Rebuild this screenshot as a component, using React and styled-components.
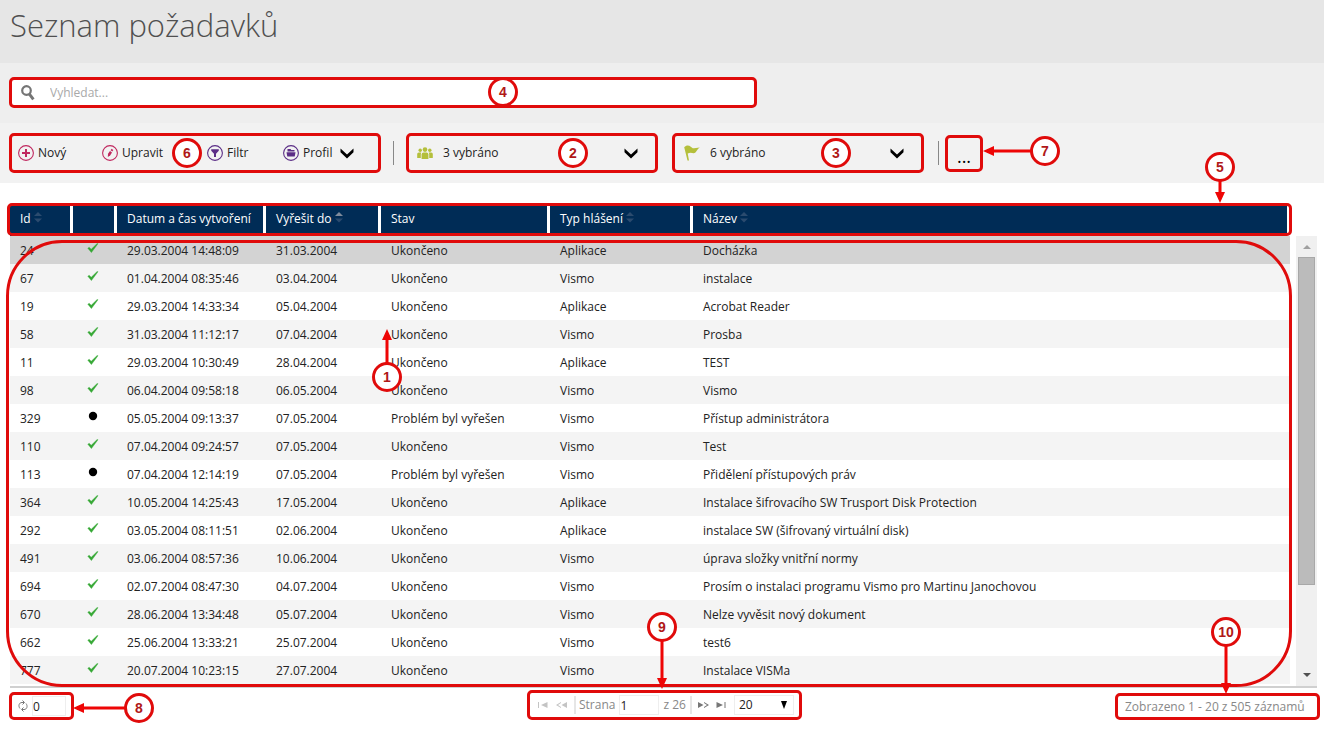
import React from "react";
import styled, { createGlobalStyle, css } from "styled-components";

const columns = [
  { label: "Id", width: 63, sort: "none" },
  { label: "", width: 44 },
  { label: "Datum a čas vytvoření", width: 149 },
  { label: "Vyřešit do", width: 115, sort: "asc" },
  { label: "Stav", width: 169 },
  { label: "Typ hlášení", width: 143, sort: "none" },
  { label: "Název", sort: "none" },
];

const requests = [
  ["24", true, "29.03.2004 14:48:09", "31.03.2004", "Ukončeno", "Aplikace", "Docházka"],
  ["67", true, "01.04.2004 08:35:46", "03.04.2004", "Ukončeno", "Vismo", "instalace"],
  ["19", true, "29.03.2004 14:33:34", "05.04.2004", "Ukončeno", "Aplikace", "Acrobat Reader"],
  ["58", true, "31.03.2004 11:12:17", "07.04.2004", "Ukončeno", "Vismo", "Prosba"],
  ["11", true, "29.03.2004 10:30:49", "28.04.2004", "Ukončeno", "Aplikace", "TEST"],
  ["98", true, "06.04.2004 09:58:18", "06.05.2004", "Ukončeno", "Vismo", "Vismo"],
  ["329", false, "05.05.2004 09:13:37", "07.05.2004", "Problém byl vyřešen", "Vismo", "Přístup administrátora"],
  ["110", true, "07.04.2004 09:24:57", "07.05.2004", "Ukončeno", "Vismo", "Test"],
  ["113", false, "07.04.2004 12:14:19", "07.05.2004", "Problém byl vyřešen", "Vismo", "Přidělení přístupových práv"],
  ["364", true, "10.05.2004 14:25:43", "17.05.2004", "Ukončeno", "Aplikace", "Instalace šifrovacího SW Trusport Disk Protection"],
  ["292", true, "03.05.2004 08:11:51", "02.06.2004", "Ukončeno", "Aplikace", "instalace SW (šifrovaný virtuální disk)"],
  ["491", true, "03.06.2004 08:57:36", "10.06.2004", "Ukončeno", "Vismo", "úprava složky vnitřní normy"],
  ["694", true, "02.07.2004 08:47:30", "04.07.2004", "Ukončeno", "Vismo", "Prosím o instalaci programu Vismo pro Martinu Janochovou"],
  ["670", true, "28.06.2004 13:34:48", "05.07.2004", "Ukončeno", "Vismo", "Nelze vyvěsit nový dokument"],
  ["662", true, "25.06.2004 13:33:21", "25.07.2004", "Ukončeno", "Vismo", "test6"],
  ["777", true, "20.07.2004 10:23:15", "27.07.2004", "Ukončeno", "Vismo", "Instalace VISMa"],
];

const Chevron = () => (
  <svg width="14" height="12" viewBox="0 0 14 12" aria-hidden="true">
    <path d="M.5 1.500v3.800L7 11.500l6.500-6.200V1.500L7 7.500z" fill="#000" />
  </svg>
);

const SearchIcon = () => (
  <svg width="16" height="16" viewBox="0 0 16 16" fill="none" stroke="#757575" aria-hidden="true">
    <circle cx="6.500" cy="5.500" r="4.300" strokeWidth="2.200" />
    <path d="M9.200 8.800l4.200 5.500" strokeWidth="3" />
  </svg>
);

const RoundIcon = ({ color, children }) => (
  <svg width="16" height="16" viewBox="0 0 16 16" aria-hidden="true">
    <circle cx="8" cy="8" r="7.400" fill="none" stroke={color} strokeWidth="1.100" />
    {children}
  </svg>
);

const PlusIcon = () => (
  <RoundIcon color="#c0285f">
    <path d="M8 4v8M4 8h8" stroke="#c0285f" strokeWidth="2" />
  </RoundIcon>
);

const EditIcon = () => (
  <RoundIcon color="#c0285f">
    <path d="M5.800 12l.2-3.200L8 6l2 1.500-1.900 3z" fill="#c0285f" />
    <path d="M8.600 5.200l1-1.400 1.700 1.300-1 1.400z" fill="#c0285f" />
  </RoundIcon>
);

const FilterIcon = () => (
  <RoundIcon color="#5b2d86">
    <path d="M4.200 4.200h7.600v1.600L9 8.700V12H7V8.700L4.200 5.800z" fill="#5b2d86" />
  </RoundIcon>
);

const FolderIcon = () => (
  <RoundIcon color="#5b2d86">
    <path d="M4.500 4h3l.8 1H11.500v1.600h-7z" fill="#5b2d86" />
    <path d="M3.500 7.200h9l-.8 4.300H4.300z" fill="#5b2d86" />
  </RoundIcon>
);

const PeopleIcon = () => (
  <svg width="16" height="13" viewBox="0 0 16 13" fill="#b4bf3b" aria-hidden="true">
    <circle cx="8" cy="2.600" r="2.300" />
    <circle cx="3.200" cy="3.200" r="1.700" />
    <circle cx="12.800" cy="3.200" r="1.700" />
    <path d="M4.600 12V7.500Q4.600 5.400 6.600 5.400h2.800q2 0 2 2.100V12z" />
    <path d="M.2 11V7Q.2 5.400 1.800 5.400h2.400Q3.800 6.200 3.800 7.500V11zM15.800 11V7q0-1.600-1.600-1.600h-2.400q.4.800.4 2.100V11z" />
  </svg>
);

const FlagIcon = () => (
  <svg width="17" height="16" viewBox="0 0 17 16" fill="#b4bf3b" aria-hidden="true">
    <path d="M1.200 2.200C3.500-.2 6 .4 7.800 1.700c1 .9 1.800 1.700 3.200 1.500L16.800 2.600c-2 1.200-3.200 3.600-4.600 5.200C10 9 8 6.800 4.700 8.600L6 15.500H4.500z" />
  </svg>
);

const CheckIcon = () => (
  <svg width="12" height="10" viewBox="0 0 12 10" aria-label="Ukončeno">
    <path d="M.8 5.200l1.400-.9 2 2L10.200.4l.8.3-6.600 8.900z" fill="#36a835" stroke="#36a835" strokeWidth=".4" />
  </svg>
);

const DotIcon = () => (
  <svg width="12" height="10" viewBox="0 0 12 10" aria-label="Vyřešeno">
    <circle cx="6" cy="5" r="4.200" fill="#000" />
  </svg>
);

const SortIcon = ({ dir }) => (
  <svg width="8" height="11" viewBox="0 0 8 11" aria-hidden="true">
    <path d="M0 4l4-4 4 4z" fill={dir === "asc" ? "#7f8b9c" : "#2b4b6e"} />
    <path d="M0 6.500l4 4 4-4z" fill="#2b4b6e" />
  </svg>
);

const RefreshIcon = () => (
  <svg width="10" height="12" viewBox="0 0 10 12" fill="none" stroke="#777" aria-hidden="true">
    <path d="M2 8.500C0 6 1 2.500 4 2.500h2M4.500.5l2 2-2 2M8 3.500c2 2.500 1 6-2 6H4M5.500 7.500l-2 2 2 2" />
  </svg>
);

const FirstIcon = () => (
  <svg width="10" height="6" viewBox="0 0 10 6" fill="#c4c4c4" aria-hidden="true">
    <path d="M0 0h1v6H0zM9.500 0v6L3 3z" />
  </svg>
);

const PrevIcon = () => (
  <svg width="11" height="6" viewBox="0 0 11 6" fill="#c4c4c4" aria-hidden="true">
    <path d="M11 0v6L5.500 3zM5 0v1L2 3l3 2v1L0 3z" />
  </svg>
);

const NextIcon = () => (
  <svg width="11" height="6" viewBox="0 0 11 6" fill="#777" aria-hidden="true">
    <path d="M0 0v6l5.500-3zM6 0v1l3 2-3 2v1l5-3z" />
  </svg>
);

const LastIcon = () => (
  <svg width="10" height="6" viewBox="0 0 10 6" fill="#777" aria-hidden="true">
    <path d="M8.500 0h1v6h-1zM.5 0v6L7 3z" />
  </svg>
);

// numbered marker, optionally with an arrow that leaves the circle
const Callout = ({ n, dir, length, ...pos }) => (
  <Marker $pos={pos}>
    {dir && (
      <Arrow
        $dir={dir}
        width={dir === "left" ? length : 10}
        height={dir === "left" ? 10 : length}
        aria-hidden="true"
      >
        {dir === "left" && <path d={`M0 5l11-5v3.500H${length}v3H11V10z`} />}
        {dir === "up" && <path d={`M5 0l5 11H6.500V${length}h-3V11H0z`} />}
        {dir === "down" && (
          <path d={`M5 ${length}l5-11H6.500V0h-3v${length - 11}H0z`} />
        )}
      </Arrow>
    )}
    <Circle>{n}</Circle>
  </Marker>
);

const App = () => {
  return (
    <>
      <GlobalStyle />
      <TitleBar>
        <h1>Seznam požadavků</h1>
      </TitleBar>
      <SearchBar>
        <SearchBox>
          <SearchIcon />
          <input type="text" placeholder="Vyhledat..." aria-label="Vyhledat" />
          <Callout n="4" left="476px" top="-3px" />
        </SearchBox>
      </SearchBar>
      <Toolbar>
        <Actions>
          <ToolButton>
            <PlusIcon />
            Nový
          </ToolButton>
          <ToolButton>
            <EditIcon />
            Upravit
          </ToolButton>
          <ToolButton>
            <FilterIcon />
            Filtr
          </ToolButton>
          <ToolButton>
            <FolderIcon />
            Profil
            <Chevron />
          </ToolButton>
          <Callout n="6" left="160px" top="2px" />
        </Actions>
        <Separator />
        <Pickers>
          <Picker>
            <PeopleIcon />
            <select aria-label="Řešitelé">
              <option>3 vybráno</option>
            </select>
            <Chevron />
            <Callout n="2" left="149px" top="2px" />
          </Picker>
          <Picker>
            <FlagIcon />
            <select aria-label="Stavy">
              <option>6 vybráno</option>
            </select>
            <Chevron />
            <Callout n="3" left="146px" top="2px" />
          </Picker>
        </Pickers>
        <Separator $tight />
        <More>
          <button>...</button>
          <Callout n="7" dir="left" length={48} left="82px" top="-2px" />
        </More>
      </Toolbar>

      <Main>
        <Grid>
          <TableWrapper>
            <Table>
              <colgroup>
                {columns.map((c, i) => (
                  <Col key={i} $width={c.width} />
                ))}
              </colgroup>
              <thead>
                <tr>
                  {columns.map((c, i) => (
                    <th key={i}>
                      {c.label} {c.sort && <SortIcon dir={c.sort} />}
                    </th>
                  ))}
                </tr>
              </thead>
              <tbody>
                {requests.map(([id, done, ...rest], i) => (
                  <Row key={id} $selected={i === 0}>
                    <td>{id}</td>
                    <StateCell>{done ? <CheckIcon /> : <DotIcon />}</StateCell>
                    {rest.map((text, j) => (
                      <td key={j}>{text}</td>
                    ))}
                  </Row>
                ))}
              </tbody>
            </Table>
            <HeadFrame />
            <BodyFrame />
            <Callout n="5" dir="down" length={22} right="55px" top="-54px" />
            <Callout n="1" dir="up" length={34} left="362px" top="156px" />
          </TableWrapper>
          <ScrollTrack>
            <svg width="8" height="4" aria-hidden="true">
              <path d="M0 4l4-4 4 4z" fill="#a0a0a0" />
            </svg>
            <ScrollThumb />
            <svg width="8" height="4" aria-hidden="true">
              <path d="M0 0l4 4 4-4z" fill="#505050" />
            </svg>
          </ScrollTrack>
        </Grid>
      </Main>

      <Footer>
        <RefreshBox>
          <RefreshIcon />
          <input type="text" defaultValue="0" aria-label="Interval obnovení" />
          <Callout n="8" dir="left" length={52} left="112px" top="-2px" />
        </RefreshBox>
        <Pager>
          <PageButton aria-label="První">
            <FirstIcon />
          </PageButton>
          <PageButton aria-label="Předchozí">
            <PrevIcon />
          </PageButton>
          <PageLabel>
            Strana
            <input type="text" defaultValue="1" />z 26
          </PageLabel>
          <PageButton aria-label="Další">
            <NextIcon />
          </PageButton>
          <PageButton aria-label="Poslední">
            <LastIcon />
          </PageButton>
          <PageSize>
            <select aria-label="Záznamů na stránku">
              <option>20</option>
            </select>
            <svg width="8" height="8" aria-hidden="true">
              <path d="M1 0h6L4 8z" />
            </svg>
          </PageSize>
          <Callout n="9" dir="down" length={48} left="117px" top="-81px" />
        </Pager>
        <Summary>
          Zobrazeno 1 - 20 z 505 záznamů
          <Callout n="10" dir="down" length={48} left="93px" top="-79px" />
        </Summary>
      </Footer>
    </>
  );
};

const red = "#e00b0b";

const GlobalStyle = createGlobalStyle`
  * {
    box-sizing: border-box;
  }
  body {
    margin: 0;
    background-color: white;
    color: #222;
    font-family: "Open Sans", "Noto Sans", sans-serif;
    font-size: 12px;
    line-height: 16px;
  }
  button,
  input,
  select {
    margin: 0;
    padding: 0;
    border: none;
    outline: none;
    background: none;
    color: inherit;
    font: inherit;
  }
  select {
    appearance: none;
  }
  svg {
    flex: none;
  }
`;

const framed = css`
  position: relative;
  border: 3px solid ${red};
  border-radius: 5px;
`;

const TitleBar = styled.header`
  height: 63px;
  padding: 4px 10px;
  background-color: #e6e6e6;
  h1 {
    margin: 0;
    color: #505050;
    font-size: 31px;
    font-weight: 300;
    line-height: 42px;
  }
`;

const SearchBar = styled.div`
  height: 60px;
  padding: 14px 9px;
  background-color: #eee;
`;

const SearchBox = styled.div`
  ${framed}
  display: flex;
  align-items: center;
  gap: 14px;
  width: 58%;
  max-width: 748px;
  height: 31px;
  padding-left: 8px;
  background-color: white;
  > input {
    flex: 1;
    &::placeholder {
      color: #a9a9a9;
      opacity: 1;
    }
  }
`;

const Toolbar = styled.div`
  display: flex;
  align-items: center;
  height: 60px;
  padding: 0 9px;
  background-color: #f2f2f2;
`;

const Actions = styled.div`
  ${framed}
  display: grid;
  grid-template-columns: 84px 105px 76px auto;
  align-items: center;
  width: 372px;
  height: 40px;
  padding-left: 6px;
`;

const ToolButton = styled.button`
  display: flex;
  align-items: center;
  gap: 4px;
  cursor: pointer;
  > svg:last-child:not(:first-child) {
    margin-left: 4px;
  }
`;

const Separator = styled.div`
  width: 1px;
  height: 24px;
  margin: ${({ $tight }) => ($tight ? "0 6px 0 14px" : "0 12px")};
  background-color: #888;
`;

const Pickers = styled.div`
  display: flex;
  gap: 14px;
`;

const Picker = styled.div`
  ${framed}
  display: flex;
  align-items: center;
  width: 252px;
  height: 40px;
  padding: 0 17px 0 8px;
  > select {
    flex: 1;
    height: 30px;
    padding-left: 10px;
  }
`;

const More = styled.div`
  ${framed}
  width: 38px;
  height: 37px;
  > button {
    width: 100%;
    height: 100%;
    padding-top: 6px;
    color: black;
    font-size: 18px;
  }
`;

const Main = styled.main`
  padding: 23px 7px 0 10px;
`;

const Grid = styled.div`
  display: flex;
  gap: 6px;
  border-bottom: 2px solid #d0d0d0;
`;

const TableWrapper = styled.div`
  position: relative;
  flex: 1;
  padding-bottom: 2px;
`;

const Table = styled.table`
  width: 100%;
  table-layout: fixed;
  border-spacing: 0;
  th {
    height: 30px;
    padding: 0 0 4px 10px;
    border-right: 3px solid white;
    background-color: #002c56;
    color: white;
    font-weight: 500;
    text-align: left;
    white-space: nowrap;
  }
  td {
    height: 28px;
    padding: 2px 0 0 10px;
    white-space: nowrap;
  }
`;

const Col = styled.col`
  width: ${({ $width }) => ($width ? `${$width}px` : "auto")};
`;

const Row = styled.tr`
  background-color: white;
  &:nth-child(even) {
    background-color: #f4f4f4;
  }
  ${({ $selected }) =>
    $selected &&
    css`
      background-color: #d3d3d3;
    `}
`;

const StateCell = styled.td`
  && {
    padding: 0 0 4px 14px;
  }
  > svg {
    display: block;
  }
`;

const Frame = styled.div`
  position: absolute;
  border: 3px solid ${red};
  pointer-events: none;
`;

const HeadFrame = styled(Frame)`
  top: -3px;
  right: -2px;
  left: -3px;
  height: 33px;
  border-radius: 5px;
`;

const BodyFrame = styled(Frame)`
  top: 34px;
  right: -2px;
  bottom: -1px;
  left: -4px;
  border-radius: 56px;
`;

const ScrollTrack = styled.div`
  display: flex;
  flex-direction: column;
  align-items: center;
  width: 21px;
  margin-top: 30px;
  padding: 9px 0;
  background-color: #f0f0f0;
  > svg:last-child {
    margin-top: auto;
  }
`;

const ScrollThumb = styled.div`
  width: 17px;
  height: 328px;
  margin-top: 8px;
  border: 1px solid #a8a8a8;
  background-color: #bbb;
`;

const Footer = styled.footer`
  display: grid;
  grid-template-columns: 1fr auto 1fr;
  align-items: end;
  padding: 2px 4px 12px 9px;
`;

const RefreshBox = styled.div`
  ${framed}
  display: flex;
  align-items: center;
  gap: 4px;
  width: 65px;
  height: 28px;
  padding-left: 6px;
  > input {
    width: 34px;
    height: 20px;
    border: 1px solid #eee;
  }
`;

const Pager = styled.div`
  ${framed}
  display: flex;
  align-items: center;
  width: 275px;
  height: 30px;
  padding-left: 8px;
`;

const PageButton = styled.button`
  display: flex;
  flex: none;
  width: 18px;
  cursor: pointer;
`;

const PageLabel = styled.label`
  display: flex;
  align-items: center;
  height: 18px;
  margin-right: 6px;
  padding: 0 4px 0 3px;
  border-right: 2px solid #e6e6e6;
  border-left: 2px solid #e6e6e6;
  color: #888;
  white-space: nowrap;
  > input {
    width: 40px;
    height: 20px;
    margin: 0 4px;
    border: 1px solid #eee;
    color: #222;
  }
`;

const PageSize = styled.div`
  display: flex;
  flex: none;
  align-items: center;
  width: 60px;
  height: 20px;
  padding: 0 5px 0 4px;
  border: 1px solid #eee;
  > select {
    flex: 1;
  }
`;

const Summary = styled.div`
  ${framed}
  justify-self: end;
  min-width: 205px;
  height: 27px;
  padding: 3px 7px;
  color: #888;
`;

const Marker = styled.div`
  position: absolute;
  top: ${({ $pos }) => $pos.top};
  right: ${({ $pos }) => $pos.right};
  left: ${({ $pos }) => $pos.left};
  z-index: 1;
  width: 30px;
  height: 30px;
  pointer-events: none;
`;

const Circle = styled.div`
  display: flex;
  justify-content: center;
  align-items: center;
  width: 30px;
  height: 30px;
  border: 3px solid ${red};
  border-radius: 50%;
  background-color: white;
  color: #b01818;
  font-family: "Liberation Sans", Arial, sans-serif;
  font-size: 14px;
  font-weight: bold;
`;

const Arrow = styled.svg`
  position: absolute;
  fill: #ee0505;
  ${({ $dir }) => $dir === "left" && "top: 10px; right: 29px;"}
  ${({ $dir }) => $dir === "up" && "bottom: 29px; left: 10px;"}
  ${({ $dir }) => $dir === "down" && "top: 29px; left: 10px;"}
`;

export default App;
